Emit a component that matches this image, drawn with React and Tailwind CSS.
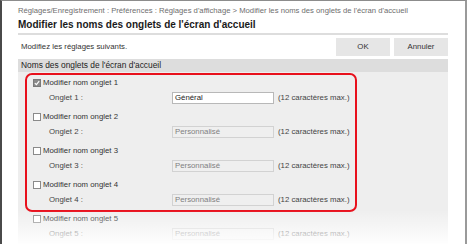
import React from 'react';

const tabs = [
    { n: 1, checked: true, value: 'Général' },
    { n: 2, checked: false, value: 'Personnalisé' },
    { n: 3, checked: false, value: 'Personnalisé' },
    { n: 4, checked: false, value: 'Personnalisé' },
    { n: 5, checked: false, value: 'Personnalisé' },
];

function Checkbox({ checked }) {
    return (
        <span
            className={
                'w-[8px] h-[8px] border flex items-center justify-center shrink-0 ' +
                (checked ? 'border-[#7a7a7a] bg-[#8a8a8a]' : 'border-[#8a8a8a] bg-white')
            }>
            {checked && (
                <svg width="6" height="6" viewBox="0 0 6 6">
                    <path d="M0.8 3.1 L2.4 4.6 L5.2 1.2" fill="none" stroke="#fff" strokeWidth="1.2" />
                </svg>
            )}
        </span>
    );
}

function TabRow({ tab }) {
    const active = tab.checked;
    return (
        <div className="flex flex-col h-[34px]">
            <div className="flex items-center h-[15px] gap-[2px] pl-[15px]">
                <Checkbox checked={tab.checked} />
                <span className="text-[#333]">Modifier nom onglet {tab.n}</span>
            </div>
            <div className="flex items-center h-[15px]">
                <span className="w-[154px] pl-[31px] text-[#444]">Onglet {tab.n} :</span>
                <div
                    className={
                        'w-[102px] h-[12px] border flex items-center px-[2px] ' +
                        (active ? 'bg-white border-[#b8b8b8] text-[#222]' : 'bg-[#efefef] border-[#d2d2d2] text-[#808080]')
                    }>
                    {tab.value}
                </div>
                <span className="ml-[4px] text-[#444] whitespace-nowrap">(12 caractères max.)</span>
            </div>
        </div>
    );
}

export default function App() {
    return (
        <div
            className="relative w-[467px] h-[244px] overflow-hidden bg-white border-t border-t-[#8c8c8c] border-l-2 border-l-[#4a4a4a] border-r-2 border-r-[#9a9a9a] text-[7.8px] leading-none"
            style={{ fontFamily: '"Liberation Sans", Arial, sans-serif' }}>
            <div className="pl-[16px] w-[446px]">
                {/* Breadcrumb */}
                <div className="h-[12px] mt-[4px] flex items-center text-[7.7px] text-[#6e6e6e] whitespace-nowrap">
                    Réglages/Enregistrement : Préférences : Réglages d'affichage &gt; Modifier les noms des onglets de l'écran d'accueil
                </div>
                {/* Title */}
                <div className="h-[18px] flex items-center text-[10px] font-bold text-[#1a1a1a] border-b-2 border-[#dddddd]">
                    Modifier les noms des onglets de l'écran d'accueil
                </div>
                {/* Instructions and buttons */}
                <div className="flex items-center justify-between h-[24px]">
                    <span className="pl-[3px] text-[#333]">Modifiez les réglages suivants.</span>
                    <div className="flex gap-[4px]">
                        <button className="w-[54px] h-[18px] bg-[#e6e6e6] text-[#333]">OK</button>
                        <button className="w-[54px] h-[18px] bg-[#e6e6e6] text-[#333]">Annuler</button>
                    </div>
                </div>
                {/* Section */}
                <div className="bg-[#dddddd] h-[13px] flex items-center pl-[3px] text-[#222] text-[8.4px]">
                    Noms des onglets de l'écran d'accueil
                </div>
                <div className="bg-[#eeeeee] h-[180px] pt-[3px]">
                    {tabs.map((t) => (
                        <TabRow key={t.n} tab={t} />
                    ))}
                </div>
            </div>
            {/* highlight frame */}
            <div className="absolute left-[23px] top-[72px] w-[332px] h-[139px] border-2 border-[#e8101c] rounded-[7px] pointer-events-none" />
            {/* bottom fade */}
            <div className="absolute left-0 right-0 bottom-0 h-[34px] bg-gradient-to-b from-white/0 to-white/95 pointer-events-none" />
        </div>
    );
}
